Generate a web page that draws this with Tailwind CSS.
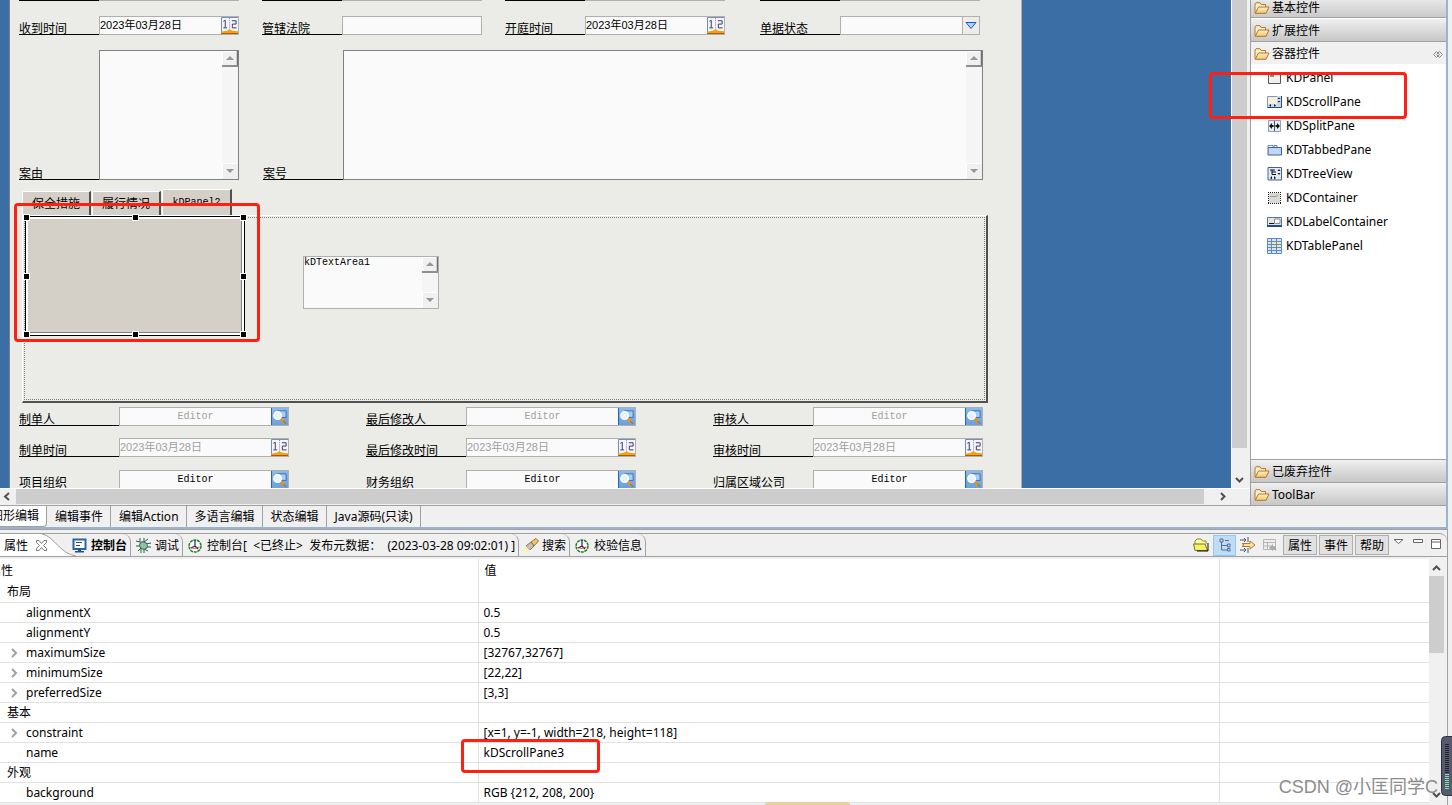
<!DOCTYPE html>
<html lang="zh-CN">
<head>
<meta charset="utf-8">
<title>KDScrollPane</title>
<script src="https://cdn.jsdelivr.net/npm/@tailwindcss/browser@4"></script>
</head>
<body class="relative flex h-screen flex-col overflow-hidden bg-[#f0f0f0] font-['Noto_Sans','Noto_Sans_CJK_SC',sans-serif] text-xs text-black">

<svg class="absolute size-0" aria-hidden="true">
  <linearGradient id="fold" x1="0" y1="0" x2="0" y2="1"><stop offset="0" stop-color="#fff3d0"/><stop offset="1" stop-color="#f3c565"/></linearGradient>
  <linearGradient id="btn" x1="0" y1="0" x2="0" y2="1"><stop offset="0" stop-color="#8ab8ee"/><stop offset="1" stop-color="#6ba0dc"/></linearGradient>
  <symbol id="folder" viewBox="0 0 16 12"><path d="M1 10.500V2L2 .7H6L7.200 2.500H11.500V5" fill="#fbeecb" stroke="#b5762a"/><path d="M1.200 11.300L4.500 5H15L12 11.300Z" fill="url(#fold)" stroke="#b5762a"/></symbol>
  <symbol id="cal" viewBox="0 0 18 18"><path d="M0 0H18V18H0Z" fill="#f4f4fa"/><path d="M.5 18V.5H18" fill="none" stroke="#6b83ad"/><path d="M9 1V14" stroke="#8189a8" stroke-dasharray="1 1"/><path d="M0 15.500L6 14.500L9 13L12 14.500L18 15V18H0Z" fill="#f5a20c"/><path d="M0 17.500H18" stroke="#a85512"/><path d="M2.500 4.500L4.500 3.500V11M2.500 11.500H6.500M11.500 4H16V7.500H12V11.500H16.500" fill="none" stroke="#2f3560"/></symbol>
  <symbol id="find" viewBox="0 0 18 18"><path d="M0 0H18V18H0Z" fill="url(#btn)"/><path d="M.5 0V18" stroke="#1e5fa8"/><path d="M7 3H16V10H10Z" fill="#a6cdf5" stroke="#3b6fb0"/><path d="M10.500 11L14 15.500" stroke="#e79518" stroke-width="3"/><path d="M13 14l3 2.500" stroke="#9b5b10"/><circle cx="7" cy="8" r="4" fill="#e4f2ff" stroke="#fff" stroke-width="1.500"/></symbol>
  <symbol id="ball" viewBox="0 0 14 14"><circle cx="7" cy="7" r="6" fill="#fff" stroke="#1d8423" stroke-width="1.500" stroke-dasharray="3 .7"/><path d="M7 1V7L10 10M7 7L3 9" fill="none" stroke="#24246c" stroke-width="1.200"/><path d="M2.500 8.500Q6 10.500 11.500 8" fill="none" stroke="#c33"/></symbol>
  <symbol id="up" viewBox="0 0 16 16"><path d="M0 0H16V16H0Z" fill="#f0f0f0"/><path d="M.5 15V.5H15" fill="none" stroke="#fff"/><path d="M15.500 0V14M0 15H16" fill="none" stroke="#6e6e6e" stroke-width="1.500"/><path d="M4 9H12L8 5Z" fill="#979797"/></symbol>
  <symbol id="down" viewBox="0 0 16 16"><path d="M0 0H16V16H0Z" fill="#f0f0f0"/><path d="M.5 15V.5H15" fill="none" stroke="#fff"/><path d="M4 6H12L8 10Z" fill="#979797"/></symbol>
  <symbol id="chev" viewBox="0 0 8 10"><path d="M2 1L6 5L2 9" fill="none" stroke="#a0a0a0" stroke-width="2"/></symbol>
</svg>

<main class="mr-1 flex min-h-0 flex-1 flex-col border-r-2 border-b-2 border-[#99b4d1]">
  <div class="flex min-h-0 flex-1">
    <section class="flex min-w-0 flex-1 flex-col" aria-label="图形编辑">
      <div class="flex min-h-0 flex-1 bg-[#3b6ea5]">
        <form class="ml-[9px] w-[1013px] shrink-0 overflow-hidden border-x border-l-[#808080] border-r-[#b0b0b0] bg-[#ebece7] pl-[9px] font-['Liberation_Sans','Noto_Sans_CJK_SC',sans-serif]">
          <div class="grid h-px grid-cols-[243px_243px_255px_220px]">
            <div class="flex w-[220px]"><i class="w-20 bg-black"></i><i class="flex-1 bg-[#b0b0b0]"></i></div>
            <div class="flex w-[220px]"><i class="w-20 bg-black"></i><i class="flex-1 bg-[#b0b0b0]"></i></div>
            <div class="flex w-[220px]"><i class="w-20 bg-black"></i><i class="flex-1 bg-[#b0b0b0]"></i></div>
            <div class="flex w-[220px]"><i class="w-20 bg-black"></i><i class="flex-1 bg-[#b0b0b0]"></i></div>
          </div>
          <div class="mt-[15px] grid h-[19px] grid-cols-[243px_243px_255px_220px]">
            <div class="flex w-[220px]"><label for="f1" class="flex w-20 shrink-0 items-end border-b border-black leading-[10px]">收到时间</label><div class="flex min-w-0 flex-1 border border-[#b0b0b0] bg-[#fafafa]"><input id="f1" class="min-w-0 flex-1 text-[11px]" value="2023年03月28日"><button type="button" aria-label="选择日期"><svg class="size-[17px]"><use href="#cal"/></svg></button></div></div>
            <div class="flex w-[220px]"><label for="f2" class="flex w-20 shrink-0 items-end border-b border-black leading-[10px]">管辖法院</label><input id="f2" class="min-w-0 flex-1 border border-[#b0b0b0] bg-[#fafafa]"></div>
            <div class="flex w-[220px]"><label for="f3" class="flex w-20 shrink-0 items-end border-b border-black leading-[10px]">开庭时间</label><div class="flex min-w-0 flex-1 border border-[#b0b0b0] bg-[#fafafa]"><input id="f3" class="min-w-0 flex-1 text-[11px]" value="2023年03月28日"><button type="button" aria-label="选择日期"><svg class="size-[17px]"><use href="#cal"/></svg></button></div></div>
            <div class="flex w-[220px]"><label for="f4" class="flex w-20 shrink-0 items-end border-b border-black leading-[10px]">单据状态</label><div class="relative flex min-w-0 flex-1 border border-[#b0b0b0] bg-[#fafafa]"><select id="f4" class="min-w-0 flex-1 appearance-none"><option></option></select><svg class="pointer-events-none absolute top-0 right-0 size-[17px]" viewBox="0 0 17 17"><path d="M0 0H17V17H0Z" fill="#efece8"/><path d="M.5 0V17" stroke="#b0b0b0"/><path d="M4 5.500H14L9 11.500Z" fill="#a9d4fb" stroke="#1659c9"/></svg></div></div>
          </div>
          <div class="mt-[15px] flex h-[130px] gap-6">
            <div class="flex w-[220px]"><label for="t1" class="flex w-20 shrink-0 items-end border-b border-black leading-[10px]">案由</label><div class="flex min-w-0 flex-1 border border-[#808080] bg-[#fafafa]"><textarea id="t1" class="min-w-0 flex-1 resize-none"></textarea><div class="flex w-4 flex-col justify-between bg-[#f5f5f5]"><svg class="size-4"><use href="#up"/></svg><svg class="size-4"><use href="#down"/></svg></div></div></div>
            <div class="flex w-[720px]"><label for="t2" class="flex w-20 shrink-0 items-end border-b border-black leading-[10px]">案号</label><div class="flex min-w-0 flex-1 border border-[#808080] bg-[#fafafa]"><textarea id="t2" class="min-w-0 flex-1 resize-none"></textarea><div class="flex w-4 flex-col justify-between bg-[#f5f5f5]"><svg class="size-4"><use href="#up"/></svg><svg class="size-4"><use href="#down"/></svg></div></div></div>
          </div>
          <div class="mt-[9px] ml-[3px] flex h-[26px] items-end gap-px">
            <button type="button" class="h-6 w-[69px] rounded-tl-xs border-t border-r-2 border-l border-t-white border-r-[#505050] border-l-white bg-[#d4d0c8]">保全措施</button>
            <button type="button" class="h-6 w-[69px] rounded-tl-xs border-t border-r-2 border-l border-t-white border-r-[#505050] border-l-white bg-[#d4d0c8]">履行情况</button>
            <button type="button" class="h-[26px] w-[70px] rounded-tl-xs border-t border-r-2 border-l border-t-white border-r-[#505050] border-l-white bg-[#d4d0c8] font-['Liberation_Mono',monospace] text-[10px]">kDPanel2</button>
          </div>
          <div class="ml-[3px] flex h-[188px] w-[966px] border-t border-r-2 border-b-2 border-l border-t-white border-r-[#505050] border-b-[#505050] border-l-white p-px">
            <div class="relative flex-1 border border-dotted border-[#808080]">
              <div class="absolute top-[-2px] left-0 h-[120px] w-[220px] border border-black bg-white p-0.5">
                <div class="h-full border-r border-b border-[#808080] bg-[#d4d0c8]"></div>
                <i class="absolute top-[-2px] left-[-2px] size-[5px] bg-black outline outline-white"></i><i class="absolute top-[-2px] left-[107px] size-[5px] bg-black outline outline-white"></i><i class="absolute top-[-2px] right-[-2px] size-[5px] bg-black outline outline-white"></i>
                <i class="absolute top-[57px] left-[-2px] size-[5px] bg-black outline outline-white"></i><i class="absolute top-[57px] right-[-2px] size-[5px] bg-black outline outline-white"></i>
                <i class="absolute bottom-[-2px] left-[-2px] size-[5px] bg-black outline outline-white"></i><i class="absolute bottom-[-2px] left-[107px] size-[5px] bg-black outline outline-white"></i><i class="absolute right-[-2px] bottom-[-2px] size-[5px] bg-black outline outline-white"></i>
              </div>
              <div class="absolute top-[38px] left-[278px] flex h-[53px] w-[136px] border border-[#b0b0b0] bg-[#fafafa]">
                <textarea aria-label="kDTextArea1" class="min-w-0 flex-1 resize-none overflow-hidden font-['Liberation_Mono',monospace] text-[10px] leading-3">kDTextArea1</textarea>
                <div class="flex w-4 flex-col justify-between bg-[#f5f5f5]"><svg class="size-4"><use href="#up"/></svg><svg class="size-4"><use href="#down"/></svg></div>
              </div>
            </div>
          </div>
          <div class="mt-1 flex h-[19px] gap-[77px]">
            <div class="flex w-[270px]"><label for="a1" class="flex w-[100px] items-end border-b border-black leading-[10px]">制单人</label><div class="flex min-w-0 flex-1 border border-[#b0b0b0] bg-[#fafafa]"><input id="a1" disabled class="min-w-0 flex-1 text-center font-['Liberation_Mono',monospace] text-[10px] text-[#a0a0a0]" value="Editor"><button type="button" aria-label="查找"><svg class="size-[17px]"><use href="#find"/></svg></button></div></div>
            <div class="flex w-[270px]"><label for="a2" class="flex w-[100px] items-end border-b border-black leading-[10px]">最后修改人</label><div class="flex min-w-0 flex-1 border border-[#b0b0b0] bg-[#fafafa]"><input id="a2" disabled class="min-w-0 flex-1 text-center font-['Liberation_Mono',monospace] text-[10px] text-[#a0a0a0]" value="Editor"><button type="button" aria-label="查找"><svg class="size-[17px]"><use href="#find"/></svg></button></div></div>
            <div class="flex w-[270px]"><label for="a3" class="flex w-[100px] items-end border-b border-black leading-[10px]">审核人</label><div class="flex min-w-0 flex-1 border border-[#b0b0b0] bg-[#fafafa]"><input id="a3" disabled class="min-w-0 flex-1 text-center font-['Liberation_Mono',monospace] text-[10px] text-[#a0a0a0]" value="Editor"><button type="button" aria-label="查找"><svg class="size-[17px]"><use href="#find"/></svg></button></div></div>
          </div>
          <div class="mt-3 flex h-[19px] gap-[77px]">
            <div class="flex w-[270px]"><label for="b1" class="flex w-[100px] items-end border-b border-black leading-[10px]">制单时间</label><div class="flex min-w-0 flex-1 border border-[#b0b0b0] bg-[#fafafa]"><input id="b1" disabled class="min-w-0 flex-1 text-[11px] text-[#a0a0a0]" value="2023年03月28日"><button type="button" aria-label="选择日期"><svg class="size-[17px]"><use href="#cal"/></svg></button></div></div>
            <div class="flex w-[270px]"><label for="b2" class="flex w-[100px] items-end border-b border-black leading-[10px]">最后修改时间</label><div class="flex min-w-0 flex-1 border border-[#b0b0b0] bg-[#fafafa]"><input id="b2" disabled class="min-w-0 flex-1 text-[11px] text-[#a0a0a0]" value="2023年03月28日"><button type="button" aria-label="选择日期"><svg class="size-[17px]"><use href="#cal"/></svg></button></div></div>
            <div class="flex w-[270px]"><label for="b3" class="flex w-[100px] items-end border-b border-black leading-[10px]">审核时间</label><div class="flex min-w-0 flex-1 border border-[#b0b0b0] bg-[#fafafa]"><input id="b3" disabled class="min-w-0 flex-1 text-[11px] text-[#a0a0a0]" value="2023年03月28日"><button type="button" aria-label="选择日期"><svg class="size-[17px]"><use href="#cal"/></svg></button></div></div>
          </div>
          <div class="mt-[13px] flex h-[19px] gap-[77px]">
            <div class="flex w-[270px]"><label for="c1" class="flex w-[100px] items-end border-b border-black leading-[10px]">项目组织</label><div class="flex min-w-0 flex-1 border border-[#b0b0b0] bg-[#fafafa]"><input id="c1" class="min-w-0 flex-1 text-center font-['Liberation_Mono',monospace] text-[10px]" value="Editor"><button type="button" aria-label="查找"><svg class="size-[17px]"><use href="#find"/></svg></button></div></div>
            <div class="flex w-[270px]"><label for="c2" class="flex w-[100px] items-end border-b border-black leading-[10px]">财务组织</label><div class="flex min-w-0 flex-1 border border-[#b0b0b0] bg-[#fafafa]"><input id="c2" class="min-w-0 flex-1 text-center font-['Liberation_Mono',monospace] text-[10px]" value="Editor"><button type="button" aria-label="查找"><svg class="size-[17px]"><use href="#find"/></svg></button></div></div>
            <div class="flex w-[270px]"><label for="c3" class="flex w-[100px] items-end border-b border-black leading-[10px]">归属区域公司</label><div class="flex min-w-0 flex-1 border border-[#b0b0b0] bg-[#fafafa]"><input id="c3" class="min-w-0 flex-1 text-center font-['Liberation_Mono',monospace] text-[10px]" value="Editor"><button type="button" aria-label="查找"><svg class="size-[17px]"><use href="#find"/></svg></button></div></div>
          </div>
        </form>
        <div class="ml-auto flex w-[19px] flex-col border-l border-white bg-[#f0f0f0] pr-[3px]">
          <div class="flex-1 bg-[#cdcdcd]"></div>
          <svg class="h-10 w-full" viewBox="0 0 15 40"><path d="M4 30L7.500 33.500L11 30" fill="none" stroke="#505050" stroke-width="2"/></svg>
        </div>
      </div>
      <div class="flex h-[17px] border-t border-white pb-px">
        <svg class="h-[15px] w-4" viewBox="0 0 16 15"><path d="M9 4L5 7.500L9 11" fill="none" stroke="#505050" stroke-width="2"/></svg>
        <div class="flex-1 bg-[#cdcdcd]"></div>
        <svg class="h-[15px] w-[46px]" viewBox="0 0 46 15"><path d="M17 4L20.500 7.500L17 11" fill="none" stroke="#505050" stroke-width="2"/></svg>
      </div>
    </section>
    <aside class="flex w-[196px] flex-col border-l border-[#a0a0a0] bg-white">
      <button type="button" class="flex h-[18px] items-center gap-0.5 border-b border-[#a0a0a0] bg-linear-to-b from-[#e8e8e8] to-[#c9c9c9] px-[3px] pb-0.5"><svg class="h-3 w-4"><use href="#folder"/></svg>基本控件</button>
      <button type="button" class="flex h-6 items-center gap-0.5 border-t border-b border-t-white border-b-[#a0a0a0] bg-linear-to-b from-[#f0f0f0] to-[#c6c6c6] px-[3px] pt-px"><svg class="h-3 w-4"><use href="#folder"/></svg>扩展控件</button>
      <button type="button" class="flex h-[22px] items-center gap-0.5 bg-[#f0f0f0] px-[3px] pt-0.5"><svg class="h-3 w-4"><use href="#folder"/></svg>容器控件<svg class="ml-auto h-[7px] w-[10px]" viewBox="0 0 10 7" fill="none" stroke="#888"><path d="M3.500 .5L.5 3.500L3.500 6.500L6.500 3.500L3.500 .5M6.500 .5L9.500 3.500L6.500 6.500L3.500 3.500Z"/></svg></button>
      <ul class="mt-0.5 flex flex-1 flex-col overflow-hidden pl-4 *:flex *:h-6 *:items-center *:gap-1">
        <li><svg class="h-4 w-[15px]" viewBox="0 0 15 16"><path d="M1.500 3.500H13.500V13.500H1.500Z" fill="#f0f0f0" stroke="#555"/><path d="M3 6H7" stroke="#222"/></svg>KDPanel</li>
        <li><svg class="h-4 w-[15px]" viewBox="0 0 15 16"><path d="M.5 2.500H14.500V13.500H.5Z" fill="#f4f0dc" stroke="#7f98bd"/><path d="M10 2H14V13H10ZM1 10H14V13H1Z" fill="#c8d8ef"/><path d="M.5 13.500H14.500V2" fill="none" stroke="#1f4d8c"/><path d="M2 11.500L4 10V13ZM9 11.500L7 10V13ZM12 3.500L10.500 5H13.500ZM12 8.500L10.500 7H13.500Z" fill="#222"/></svg>KDScrollPane</li>
        <li><svg class="h-4 w-[15px]" viewBox="0 0 15 16"><path d="M1.500 2.500H13.500V13.500H1.500Z" fill="#e4ebf5" stroke="#8ba0be"/><path d="M7.500 3V13" stroke="#555"/><path d="M2 8L5 5V7H6.500V9H5V11ZM13 8L10 5V7H8.500V9H10V11Z" fill="#111"/></svg>KDSplitPane</li>
        <li><svg class="h-4 w-[15px]" viewBox="0 0 15 16"><path d="M1 5V3.500H6V5M7 5V3.500H10V5" fill="#fff" stroke="#6f87ab"/><path d="M1 5.500H14.500V13H1Z" fill="#c1d5f5" stroke="#39629e"/></svg>KDTabbedPane</li>
        <li><svg class="h-4 w-[15px]" viewBox="0 0 15 16"><path d="M1 1.500H14.500V14H1Z" fill="#e4eaf2" stroke="#3d6499"/><path d="M3 4H8M5 4V8.500M5 6H9M5 8.500H9" stroke="#111"/><path d="M3 12L5 10V13.500ZM9 12L7 10V13.500ZM12 3L10.500 5H13.500ZM12 9L10.500 7H13.500Z" fill="#222"/></svg>KDTreeView</li>
        <li><svg class="h-4 w-[15px]" viewBox="0 0 15 16"><path d="M2 3H13V13H2Z" fill="#d9d9d3"/><path d="M1 2.500H14M1 13.500H14M1.500 2V14M13.500 2V14" fill="none" stroke="#222" stroke-dasharray="1 1" shape-rendering="crispEdges"/><path d="M3 6.500H9L11 5" fill="none" stroke="#999"/></svg>KDContainer</li>
        <li><svg class="h-4 w-[15px]" viewBox="0 0 15 16"><path d="M.5 3.500H14.500V12H.5Z" fill="#e8e6dc" stroke="#5577a5"/><path d="M7.500 5H13V9.500H7.500Z" fill="#fff" stroke="#88a"/><path d="M2 9.500H7" stroke="#111"/><path d="M0 12H15" stroke="#1f4d8c" stroke-width="2"/></svg>KDLabelContainer</li>
        <li><svg class="h-4 w-[15px]" viewBox="0 0 15 16"><path d="M.5 .5H14.500V15.500H.5Z" fill="#d8e6f8" stroke="#5b8ac8"/><path d="M5 4H14V9H5Z" fill="#f5e9a0"/><path d="M4.500 0V16M9.500 0V16M0 3.500H15M0 6.500H15M0 9.500H15M0 12.500H15" stroke="#5b8ac8"/></svg>KDTablePanel</li>
      </ul>
      <button type="button" class="flex h-[23px] items-center gap-0.5 border-t border-[#a0a0a0] bg-linear-to-b from-[#f0f0f0] to-[#c6c6c6] px-[3px] pt-0.5"><svg class="h-3 w-4"><use href="#folder"/></svg>已废弃控件</button>
      <button type="button" class="flex h-[23px] items-center gap-0.5 border-t border-[#a0a0a0] bg-linear-to-b from-[#f0f0f0] to-[#c6c6c6] px-[3px] pt-0.5"><svg class="h-3 w-4"><use href="#folder"/></svg>ToolBar</button>
    </aside>
  </div>
  <nav class="flex h-[22px] border-t border-[#a0a0a0] *:border-r *:border-[#a0a0a0] *:pr-[7px] *:pl-2 *:whitespace-nowrap">
    <button class="flex w-[47px] items-center justify-end overflow-hidden rounded-br-sm border-b bg-white"><span class="shrink-0">图形编辑</span></button>
    <button>编辑事件</button>
    <button>编辑Action</button>
    <button>多语言编辑</button>
    <button>状态编辑</button>
    <button>Java源码(只读)</button>
  </nav>
</main>

<section class="mr-1 flex h-[276px] shrink-0 flex-col border-t border-r border-[#a0a0a0] pt-[3px]">
  <div class="flex h-6 shrink-0 items-stretch rounded-tr-lg border-y border-[#a0a0a0] whitespace-nowrap [&>button]:pt-px">
    <div class="relative flex items-center">
      <svg class="absolute inset-0 h-full w-[84px]" viewBox="0 0 84 22"><path d="M0 0H42C54 2 60 20 76 22H0Z" fill="#fff"/><path d="M42 0C54 2 60 20 76 22" fill="none" stroke="#a0a0a0"/></svg>
      <button class="relative flex w-[72px] items-center gap-2 pt-px pl-1">属性<svg class="size-[11px]" viewBox="0 0 11 11"><path d="M.5 .5H3L5.500 3.500L8 .5H10.500V2.500L7.500 5.500L10.500 8.500V10.500H8L5.500 7.500L3 10.500H.5V8.500L3.500 5.500L.5 2.500Z" fill="#fff" stroke="#777"/></svg></button>
    </div>
    <button class="flex items-center gap-1 rounded-tr-lg border-r border-[#a0a0a0] pr-[3px] font-bold"><svg class="size-[15px]" viewBox="0 0 15 15"><path d="M1.500 1.500H13.500V11H1.500Z" fill="#fff" stroke="#2a63ab" stroke-width="2"/><path d="M4 4.500H10M4 7.500H8" stroke="#445"/><path d="M3 13H12V14.500H3ZM6 11H9V13H6Z" fill="#2a4d80"/></svg>控制台</button>
    <button class="flex items-center gap-1 rounded-tr-lg border-r border-[#a0a0a0] pr-[3px] pl-[5px]"><svg class="size-[15px]" viewBox="0 0 15 15"><path d="M4 0V4L0 3M8 0V4L12 1M0 8H4M2 13L5 10V15M8 15V11L12 13M10 6L15 5M10 9L15 9" fill="none" stroke="#31584e"/><ellipse cx="7.500" cy="7.500" rx="4" ry="3.500" fill="#8fc4a2" stroke="#2f6556" transform="rotate(35 7.500 7.500)"/></svg>调试</button>
    <button class="flex items-center gap-[5px] rounded-tr-lg border-r border-[#a0a0a0] pr-[3px] pl-[5px] whitespace-pre"><svg class="size-3.5"><use href="#ball"/></svg>控制台[  &lt;已终止&gt;  发布元数据：  (2023-03-28 09:02:01) ]</button>
    <button class="flex items-center gap-[3px] rounded-tr-lg border-r border-[#a0a0a0] pr-[3px] pl-1"><svg class="size-4" viewBox="0 0 16 16"><path d="M8 4L13 .5L15.500 3L11 8Z" fill="#f4c36b" stroke="#a1702a"/><path d="M3 8L8 4L11 8L7 12Z" fill="#c8c0b8" stroke="#86705b"/><path d="M3 8L0 15L7 12Z" fill="#fff3a2"/></svg>搜索</button>
    <button class="flex items-center gap-[5px] rounded-tr-lg border-r border-[#a0a0a0] pr-[3px] pl-[5px]"><svg class="size-3.5"><use href="#ball"/></svg>校验信息</button>
    <div class="ml-auto flex items-center pr-1">
      <button aria-label="打开" class="mr-1"><svg class="size-4" viewBox="0 0 16 16"><path d="M2 12V4L4 2H8L9.500 4H13V7" fill="#ffffa0" stroke="#8a8a20"/><path d="M2 13.500L.5 7H12L14.500 13.500Z" fill="#f5f06a" stroke="#77771c"/><path d="M15 6V14H4" fill="none" stroke="#111"/></svg></button>
      <button aria-label="分类" class="flex h-[21px] w-[23px] items-center justify-center border border-[#90c8f6] bg-[#c2dcf3]"><svg class="size-3.5" viewBox="0 0 14 14" fill="none" stroke="#4d6f9f"><path d="M2 1H5V4H2ZM3.500 4V12H9M3.500 7.500H9"/><path d="M9.500 6H12V9H9.500ZM9.500 10.500H12V13H9.500ZM7 2.500H11"/></svg></button>
      <button aria-label="过滤" class="ml-1"><svg class="size-4" viewBox="0 0 16 16"><path d="M0 3H6M0 13H6M8 0V5M8 11V16M4 1L6 3L4 5M4 11L6 13L4 15" fill="none" stroke="#3f5c73"/><path d="M2 6.500H10V4L15 8L10 12V9.500H2L4 8Z" fill="#ffe3a0" stroke="#b7792b"/></svg></button>
      <button aria-label="还原" class="ml-[7px]"><svg class="size-3.5" viewBox="0 0 14 14"><path d="M.5 1.500H12.500V11.500H.5ZM.5 4.500H12.500M.5 8H8M4.500 4V12" fill="none" stroke="#b5b5b5"/><path d="M6 9.500L10 6V8Q14 8 13 13Q12 11 10 11V13Z" fill="#aaa"/></svg></button>
      <button class="ml-1.5 h-5 w-[34px] border border-[#adadad] bg-[#e1e1e1] pt-px">属性</button>
      <button class="ml-0.5 h-5 w-[34px] border border-[#adadad] bg-[#e1e1e1] pt-px">事件</button>
      <button class="ml-0.5 h-5 w-[34px] border border-[#adadad] bg-[#e1e1e1] pt-px">帮助</button>
      <svg class="ml-1 h-4 w-[50px]" viewBox="0 0 50 16" fill="#fff" stroke="#666"><path d="M1 2.500H10L5.500 6.500ZM20.500 2.500H29.500V5.500H20.500ZM38.500 2.500H47.500V11.500H38.500ZM38.500 5H47.500"/></svg>
    </div>
  </div>
  <div class="mt-0.5 flex min-h-0 flex-1">
    <div class="min-w-0 flex-1">
      <table class="w-full table-fixed border-collapse bg-white text-left [&_td]:border-b [&_td]:border-[#e2e2e2] [&_td]:p-0 [&_td]:pt-px [&_td]:pl-[5px] [&_td+td]:border-l [&_th+th]:border-l [&_th+th]:border-[#e2e2e2] [&_tbody_tr]:h-5 [&_tr>td:first-child]:pl-[7px]">
        <colgroup><col class="w-[478px]"><col class="w-[741px]"><col></colgroup>
        <thead><tr class="h-[23px]"><th class="p-0 pt-px font-normal"><div class="flex w-[13px] justify-end overflow-hidden"><span class="shrink-0">属性</span></div></th><th class="p-0 pt-px pl-1.5 font-normal">值</th><th></th></tr></thead>
        <tbody>
          <tr><td>布局</td><td></td><td></td></tr>
          <tr><td><span class="ml-[19px]">alignmentX</span></td><td>0.5</td><td></td></tr>
          <tr><td><span class="ml-[19px]">alignmentY</span></td><td>0.5</td><td></td></tr>
          <tr><td><span class="flex items-center"><svg class="mx-[3px] mr-2 h-[10px] w-2"><use href="#chev"/></svg>maximumSize</span></td><td>[32767,32767]</td><td></td></tr>
          <tr><td><span class="flex items-center"><svg class="mx-[3px] mr-2 h-[10px] w-2"><use href="#chev"/></svg>minimumSize</span></td><td>[22,22]</td><td></td></tr>
          <tr><td><span class="flex items-center"><svg class="mx-[3px] mr-2 h-[10px] w-2"><use href="#chev"/></svg>preferredSize</span></td><td>[3,3]</td><td></td></tr>
          <tr><td>基本</td><td></td><td></td></tr>
          <tr><td><span class="flex items-center"><svg class="mx-[3px] mr-2 h-[10px] w-2"><use href="#chev"/></svg>constraint</span></td><td>[x=1, y=-1, width=218, height=118]</td><td></td></tr>
          <tr><td><span class="ml-[19px]">name</span></td><td>kDScrollPane3</td><td></td></tr>
          <tr><td>外观</td><td></td><td></td></tr>
          <tr><td><span class="ml-[19px]">background</span></td><td>RGB {212, 208, 200}</td><td></td></tr>
        </tbody>
      </table>
    </div>
    <div class="flex w-[18px] flex-col pr-[3px]">
      <svg class="h-[17px] w-full" viewBox="0 0 15 17"><path d="M4 11L7.500 7.500L11 11" fill="none" stroke="#505050" stroke-width="2"/></svg>
      <div class="h-[77px] bg-[#cdcdcd]"></div>
      <svg class="mt-auto h-[17px] w-full" viewBox="0 0 15 17"><path d="M4 5L7.500 8.500L11 5" fill="none" stroke="#505050" stroke-width="2"/></svg>
    </div>
  </div>
</section>

<!-- Annotations and desktop overlays -->
<div class="pointer-events-none absolute top-[72px] right-[45px] h-[47px] w-[198px] rounded-sm border-3 border-[#ff2011]"></div>
<div class="pointer-events-none absolute top-[203px] left-3.5 h-[139px] w-[246px] rounded-sm border-3 border-[#ff2011]"></div>
<div class="pointer-events-none absolute bottom-8 left-[461px] h-[34px] w-[139px] rounded-sm border-3 border-[#ff2011]"></div>
<div class="pointer-events-none absolute bottom-0 left-[765px] h-[3px] w-[85px] rounded-t-sm bg-[#edcfa4]"></div>
<svg class="absolute right-0 bottom-[9px] h-[60px] w-[11px]" viewBox="0 0 11 60"><rect x=".5" y=".5" width="16" height="59" rx="4" fill="#555b6c" stroke="#2d3140"/><path d="M6 8V37" stroke="#1f2230" stroke-width="4" stroke-dasharray="1 1"/><path d="M6 38V53" stroke="#7fe0b0" stroke-width="4" stroke-dasharray="1 1"/></svg>
<div class="pointer-events-none absolute right-3.5 bottom-1.5 font-['Liberation_Sans','Noto_Sans_CJK_SC',sans-serif] text-lg leading-6 text-[#8c8c8c]">CSDN @小匡同学C</div>
</body>
</html>
